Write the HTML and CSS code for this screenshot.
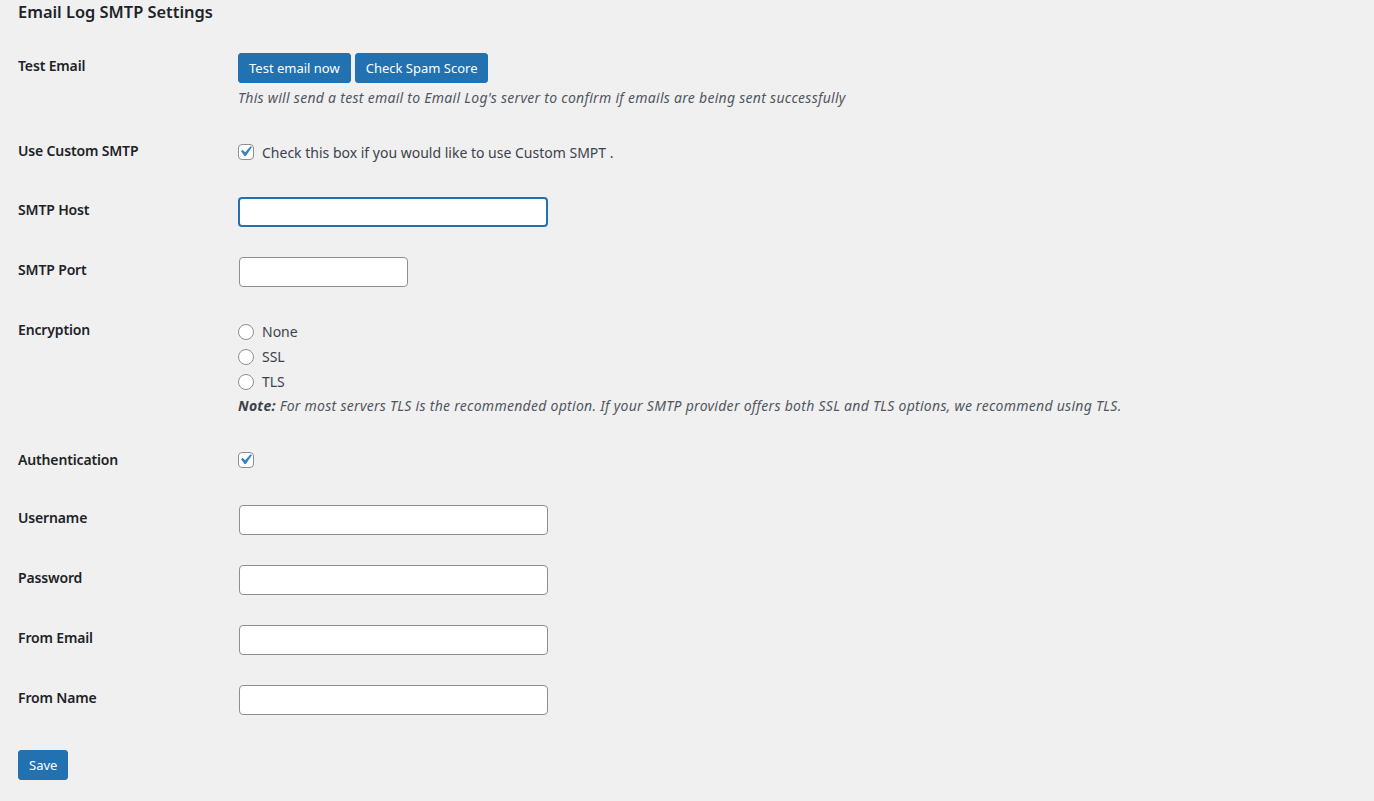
FILE: index.html
```html
<!DOCTYPE html>
<html lang="en">
<head>
<meta charset="utf-8">
<title>Email Log SMTP Settings</title>
<link rel="stylesheet" href="styles.css">
</head>
<body>
<div class="wrap">
  <h2 class="title">Email Log SMTP Settings</h2>
  <form class="form">
    <div class="row">
      <div class="th">Test Email</div>
      <div class="td">
        <div class="btns">
          <button type="button" class="btn">Test email now</button>
          <button type="button" class="btn">Check Spam Score</button>
        </div>
        <p class="description">This will send a test email to Email Log's server to confirm if emails are being sent successfully</p>
      </div>
    </div>
    <div class="row">
      <div class="th">Use Custom SMTP</div>
      <div class="td">
        <label class="check-line with-text"><span class="cb"><svg class="tick" viewBox="0 0 20 20"><path d="M14.83 4.89l1.34.94-5.81 8.38H9.02L5.78 9.67l1.34-1.25 2.57 2.4z"/></svg></span>Check this box if you would like to use Custom SMPT .</label>
      </div>
    </div>
    <div class="row">
      <div class="th">SMTP Host</div>
      <div class="td"><span class="input focus"></span></div>
    </div>
    <div class="row">
      <div class="th">SMTP Port</div>
      <div class="td"><span class="input small"></span></div>
    </div>
    <div class="row">
      <div class="th">Encryption</div>
      <div class="td">
        <div class="radios">
          <label class="radio-line"><span class="radio"></span>None</label>
          <label class="radio-line"><span class="radio"></span>SSL</label>
          <label class="radio-line"><span class="radio"></span>TLS</label>
        </div>
        <p class="description note"><strong>Note:</strong> For most servers TLS is the recommended option. If your SMTP provider offers both SSL and TLS options, we recommend using TLS.</p>
      </div>
    </div>
    <div class="row">
      <div class="th">Authentication</div>
      <div class="td">
        <label class="check-line"><span class="cb"><svg class="tick" viewBox="0 0 20 20"><path d="M14.83 4.89l1.34.94-5.81 8.38H9.02L5.78 9.67l1.34-1.25 2.57 2.4z"/></svg></span></label>
      </div>
    </div>
    <div class="row">
      <div class="th">Username</div>
      <div class="td"><span class="input"></span></div>
    </div>
    <div class="row">
      <div class="th">Password</div>
      <div class="td"><span class="input"></span></div>
    </div>
    <div class="row">
      <div class="th">From Email</div>
      <div class="td"><span class="input"></span></div>
    </div>
    <div class="row">
      <div class="th">From Name</div>
      <div class="td"><span class="input"></span></div>
    </div>
    <div class="submit">
      <button type="button" class="btn">Save</button>
    </div>
  </form>
</div>
</body>
</html>
```
FILE: styles.css
```css
* { box-sizing: border-box; }
html, body { margin: 0; padding: 0; }
body {
  background: #f0f0f1;
  color: #3c434a;
  font-family: "Noto Sans", "Open Sans", sans-serif;
  font-size: 14px;
  width: 1374px;
  height: 801px;
  overflow: hidden;
}
.wrap { padding: 0 18px; }
.title {
  margin: 0;
  font-size: 16.4px;
  line-height: 24px;
  font-weight: 600;
  color: #1d2327;
}
.form { margin-top: 14px; }
.row {
  display: grid;
  grid-template-columns: 210px 1fr;
}
.th {
  padding: 19px 10px 21px 0;
  line-height: 18px;
  font-weight: 600;
  color: #1d2327;
  font-size: 14px;
  letter-spacing: -0.15px;
}
.td { padding: 15px 10px; }
.btns { display: flex; gap: 4px; }
.btn {
  font-family: inherit;
  font-size: 13px;
  line-height: 28px;
  height: 30px;
  padding: 0 10px;
  background: #2271b1;
  color: #fff;
  border: 1px solid #2271b1;
  border-radius: 3px;
  cursor: pointer;
}
.description {
  margin: 4px 0 0;
  font-size: 14px;
  line-height: 21px;
  font-style: italic;
  letter-spacing: 0.28px;
  color: #50575e;
}
.description strong { font-weight: 700; color: #3c434a; }
.check-line {
  display: flex;
  align-items: center;
  height: 26px;
  gap: 8px;
  color: #3c434a;
}
.check-line.with-text { margin: 1px 0 2px; }
.cb {
  width: 16px;
  height: 16px;
  border: 1px solid #8c8f94;
  border-radius: 4px;
  background: #fff;
  position: relative;
  flex: none;
}
.tick {
  position: absolute;
  width: 21px;
  height: 21px;
  left: -4px;
  top: -4px;
  fill: #3582c4;
}
.input {
  display: block;
  width: 309px;
  height: 30px;
  margin-left: 1px;
  background: #fff;
  border: 1px solid #8c8f94;
  border-radius: 4px;
}
.input.small { width: 169px; }
.input.focus {
  margin-left: 0;
  width: 310px;
  border: 2px solid #2271b1;
}
.radios { padding-top: 2px; }
.radio-line {
  display: flex;
  align-items: center;
  height: 25px;
  gap: 8px;
}
.radio {
  width: 16px;
  height: 16px;
  border: 1px solid #8c8f94;
  border-radius: 50%;
  background: #fff;
  flex: none;
}
.note { margin: 2px 0 1px; line-height: 20px; }
.submit { margin: 20px 0 0; }
```
